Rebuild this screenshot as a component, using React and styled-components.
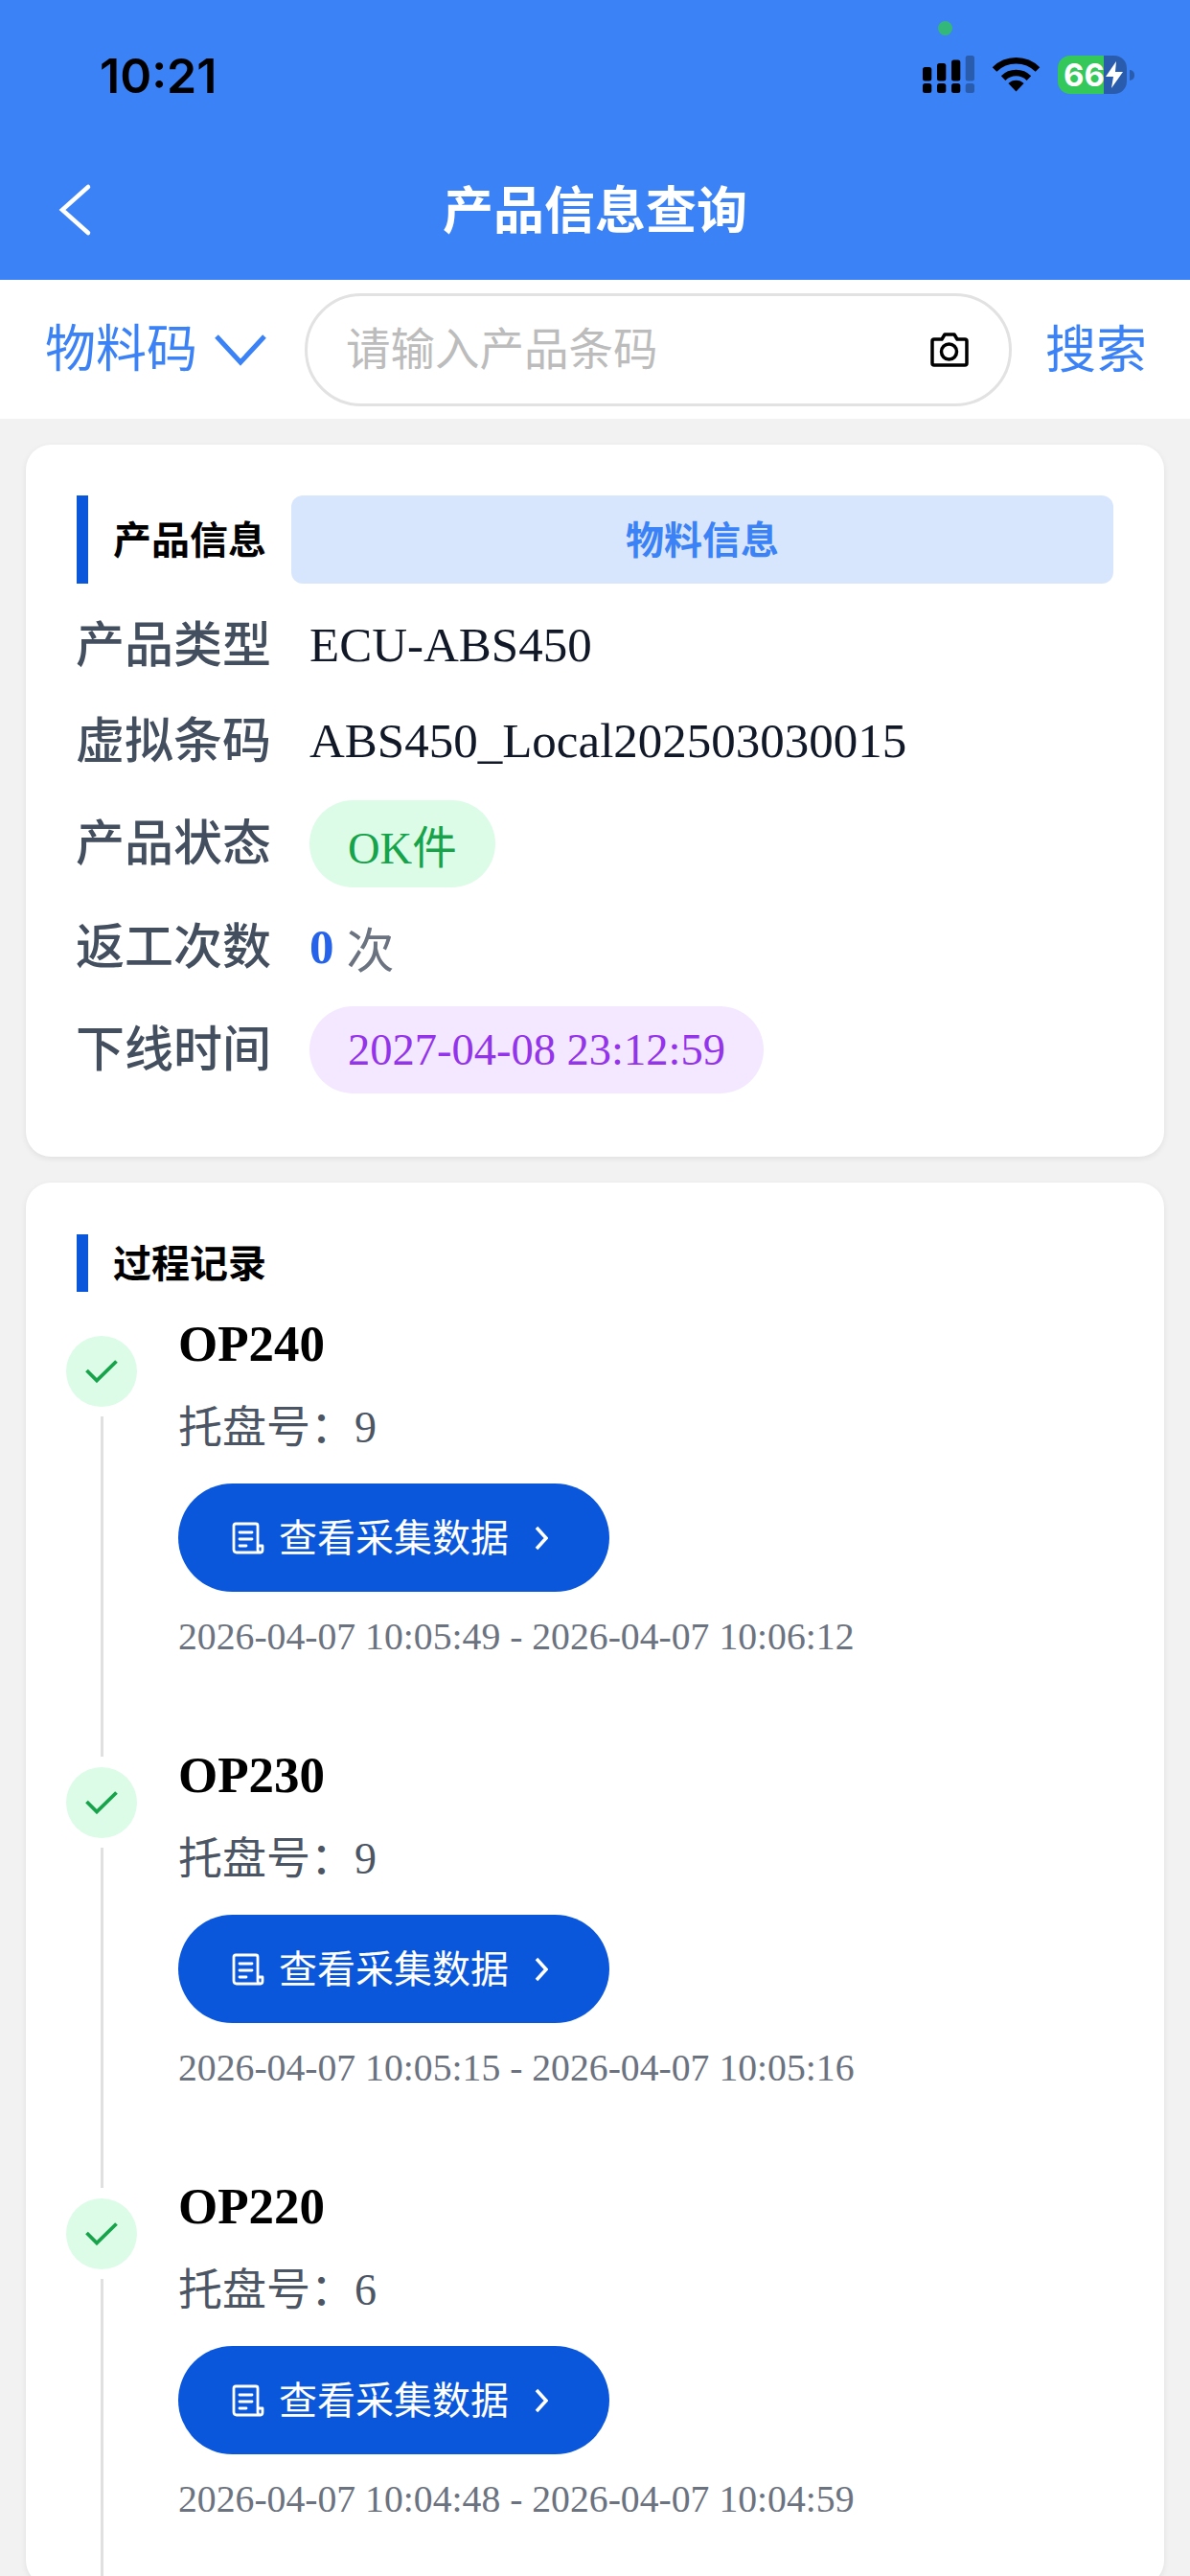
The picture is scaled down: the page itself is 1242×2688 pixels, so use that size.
import React from 'react';
import styled, { createGlobalStyle } from 'styled-components';

const GlobalStyle = createGlobalStyle`
  html, body {
    margin: 0;
    padding: 0;
    background: #f2f2f2;
  }
  * {
    box-sizing: border-box;
  }
`;

const serif = `"Liberation Serif", "Noto Sans CJK SC", serif`;
const sans = `"Noto Sans CJK SC", "Noto Sans", sans-serif`;

const Page = styled.div`
  position: relative;
  width: 1242px;
  height: 2688px;
  overflow: hidden;
  background: #f2f2f2;
  font-family: ${serif};
`;

const Header = styled.header`
  height: 292px;
  background: #3b82f6;
  display: flex;
  flex-direction: column;
`;

const StatusBar = styled.div`
  height: 158px;
  padding: 54px 58px 0 104px;
  display: flex;
  justify-content: space-between;
  align-items: flex-start;
`;

const Clock = styled.span`
  font-family: Inter, sans-serif;
  font-size: 50px;
  font-weight: 600;
  line-height: 50px;
  color: #000;
`;

const StatusIcons = styled.div`
  display: flex;
  align-items: flex-start;
  gap: 18px;
  margin-top: 4px;
`;

const CameraDot = styled.span`
  position: absolute;
  left: 979px;
  top: 22px;
  width: 15px;
  height: 15px;
  border-radius: 50%;
  background: #34b87a;
`;

const Battery = styled.div`
  display: flex;
  align-items: center;
`;

const BatteryBody = styled.div`
  width: 72px;
  height: 40px;
  border-radius: 13px;
  overflow: hidden;
  display: flex;
  background: linear-gradient(90deg, #34c759 0 48px, #2a5cad 48px);
`;

const BatteryText = styled.span`
  width: 48px;
  padding-left: 6px;
  font-family: Inter, sans-serif;
  font-size: 33px;
  line-height: 40px;
  font-weight: 700;
  color: #fff;
`;

const BatteryBolt = styled.svg`
  width: 20px;
  height: 28px;
  margin: 6px 0 0 1px;
`;

const BatteryTip = styled.span`
  width: 5px;
  height: 11px;
  margin-left: 3px;
  border-radius: 0 5px 5px 0;
  background: #2a5cad;
`;

const NavBar = styled.div`
  position: relative;
  flex: 1;
  display: flex;
  align-items: flex-start;
  justify-content: center;
  padding-top: 24px;
`;

const BackIcon = styled.svg`
  position: absolute;
  left: 60px;
  top: 30px;
  width: 37px;
  height: 62px;
`;

const NavTitle = styled.h1`
  margin: 0;
  font-family: ${sans};
  font-size: 53px;
  line-height: 68px;
  font-weight: 700;
  color: #fff;
`;

const SearchBar = styled.div`
  height: 145px;
  background: #fff;
  display: flex;
  align-items: center;
  padding: 0 48px 0 47px;
`;

const Picker = styled.div`
  width: 271px;
  flex: none;
  display: flex;
  align-items: center;
  gap: 18px;
  font-family: ${sans};
  font-size: 53px;
  color: #3b82f6;
`;

const PickerText = styled.span`
  padding-bottom: 9px;
`;

const SearchInput = styled.div`
  width: 738px;
  height: 118px;
  flex: none;
  margin-right: 35px;
  padding: 0 42px 0 40px;
  border: 3px solid #e2e2e2;
  border-radius: 59px;
  display: flex;
  align-items: center;
  justify-content: space-between;
  font-family: ${sans};
  font-size: 46.5px;
  color: #bcbcbc;
`;

const Placeholder = styled.span`
  padding-bottom: 8px;
`;

const SearchAction = styled.span`
  flex: none;
  padding-bottom: 8px;
  font-family: ${sans};
  font-size: 53px;
  color: #3b82f6;
`;

const Card = styled.section`
  margin: 27px 27px 0;
  padding: ${(p) => p.$pad};
  background: #fff;
  border-radius: 26px;
  box-shadow: 0 2px 6px rgba(0, 0, 0, 0.08);
`;

const CardHead = styled.div`
  display: flex;
  align-items: stretch;
  height: ${(p) => p.$height}px;
`;

const SectionTitle = styled.h2`
  margin: 0;
  padding: 0 0 5px 26px;
  border-left: 12px solid #0b57dc;
  display: flex;
  align-items: center;
  font-family: ${sans};
  font-size: 40px;
  font-weight: 700;
  color: #000;
`;

const Tab = styled.div`
  flex: 1;
  margin-left: 26px;
  padding-bottom: 5px;
  border-radius: 12px;
  background: #d8e6fd;
  display: flex;
  align-items: center;
  justify-content: center;
  font-family: ${sans};
  font-size: 40px;
  font-weight: 700;
  color: #3b82f6;
`;

const InfoRows = styled.div`
  margin-top: 16px;
`;

const InfoRow = styled.div`
  height: ${(p) => p.$height}px;
  display: flex;
  align-items: center;
`;

const Label = styled.span`
  width: 244px;
  flex: none;
  margin-left: -1px;
  padding-bottom: 8px;
  font-family: ${sans};
  font-size: 51px;
  font-weight: 500;
  color: #434e5f;
`;

const Value = styled.span`
  font-size: 51px;
  color: #111827;
`;

const Pill = styled.span`
  height: 91px;
  padding: 0 40px;
  border-radius: 46px;
  display: flex;
  align-items: center;
  font-size: 46.5px;
  background: ${(p) => p.$bg};
  color: ${(p) => p.$color};
`;

const Count = styled.strong`
  font-size: 51px;
  color: #2563eb;
`;

const Unit = styled.span`
  margin-left: 13px;
  font-size: 50px;
  color: #6b7280;
`;

const Timeline = styled.div`
  margin-top: 0;
`;

const Step = styled.div`
  height: 450px;
  display: grid;
  grid-template-columns: 117px 1fr;
  margin-left: -11px;
`;

const Rail = styled.div`
  display: flex;
  flex-direction: column;
  align-items: center;
  width: 74px;
  padding-top: 46px;
`;

const Dot = styled.span`
  width: 74px;
  height: 74px;
  flex: none;
  border-radius: 50%;
  background: #dcfce7;
  display: flex;
  align-items: center;
  justify-content: center;
`;

const RailLine = styled.span`
  width: 3px;
  flex: 1;
  margin-top: 10px;
  margin-bottom: -35px;
  background: #e0e0e0;
`;

const StepBody = styled.div`
  display: flex;
  flex-direction: column;
  align-items: flex-start;
`;

const StepName = styled.div`
  height: 68px;
  margin-top: 20px;
  font-size: 53px;
  line-height: 68px;
  font-weight: 700;
  color: #000;
`;

const Tray = styled.div`
  height: 60px;
  margin-top: 24px;
  font-size: 46px;
  line-height: 60px;
  color: #4b5563;
`;

const DataButton = styled.button`
  width: 450px;
  height: 113px;
  margin-top: 28px;
  padding: 0 0 0 56px;
  border: 0;
  border-radius: 57px;
  background: #0b57dc;
  display: flex;
  align-items: center;
  gap: 15px;
  font-family: ${sans};
  font-size: 40px;
  color: #fff;
`;

const ButtonText = styled.span`
  padding-bottom: 5px;
`;

const ButtonChevron = styled.svg`
  width: 14px;
  height: 30px;
  margin-left: 12px;
`;

const Times = styled.div`
  margin-top: 22px;
  font-size: 39.7px;
  line-height: 50px;
  color: #6b7280;
`;

const steps = [
  { name: 'OP240', tray: 9, time: '2026-04-07 10:05:49 - 2026-04-07 10:06:12' },
  { name: 'OP230', tray: 9, time: '2026-04-07 10:05:15 - 2026-04-07 10:05:16' },
  { name: 'OP220', tray: 6, time: '2026-04-07 10:04:48 - 2026-04-07 10:04:59' },
];

const Signal = () => (
  <svg width="54" height="42" viewBox="0 0 54 42">
    <g fill="#000">
      <rect x="0" y="12" width="9.3" height="14.5" rx="2.5" />
      <rect x="15" y="8" width="9.3" height="18.5" rx="2.5" />
      <rect x="30" y="4.5" width="9.3" height="22" rx="2.5" />
      <rect x="0" y="29" width="9.3" height="10" rx="2.5" />
      <rect x="15" y="29" width="9.3" height="10" rx="2.5" />
      <rect x="30" y="29" width="9.3" height="10" rx="2.5" />
    </g>
    <g fill="#2a5cad">
      <rect x="44.7" y="0" width="9.3" height="26.5" rx="2.5" />
      <rect x="44.7" y="29" width="9.3" height="10" rx="2.5" />
    </g>
  </svg>
);

const Wifi = () => (
  <svg width="51" height="38" viewBox="0 0 51 38">
    <g fill="none" stroke="#000" strokeWidth="6.5">
      <path d="M3 14.5 A32 32 0 0 1 48 14.5" />
      <path d="M12.1 23.6 A19 19 0 0 1 38.9 23.6" />
    </g>
    <path d="M25.5 37.5 L17.4 29 A11.5 11.5 0 0 1 33.6 29 Z" fill="#000" />
  </svg>
);

const Camera = () => (
  <svg width="40" height="36" viewBox="0 0 40 36">
    <path
      d="M4 7 H12 L15 2 H25 L28 7 H36 Q38 7 38 9 V32 Q38 34 36 34 H4 Q2 34 2 32 V9 Q2 7 4 7 Z"
      fill="none"
      stroke="#000"
      strokeWidth="3.5"
      strokeLinejoin="round"
    />
    <circle cx="19.5" cy="20" r="8" fill="none" stroke="#000" strokeWidth="3.5" />
  </svg>
);

const DocIcon = () => (
  <svg width="34" height="34" viewBox="0 0 34 34" fill="none" stroke="#fff" strokeWidth="2.8" strokeLinecap="round" strokeLinejoin="round">
    <path d="M30 32 H5 Q2 32 2 29 V4 Q2 2 4 2 H25 Q27 2 27 4 V29 Q27 32 30 32 Q32 32 32 29 V25 H27" />
    <path d="M8 11 H21 M8 18 H21 M8 25 H15" />
  </svg>
);

const Check = () => (
  <svg width="34" height="24" viewBox="0 0 34 24" fill="none" stroke="#16a34a" strokeWidth="3.8">
    <path d="M1.5 11 L12 21.5 L32.5 1.5" />
  </svg>
);

const App = () => (
  <Page>
    <GlobalStyle />
    <Header>
      <StatusBar>
        <Clock>10:21</Clock>
        <StatusIcons>
          <Signal />
          <Wifi />
          <Battery>
            <BatteryBody>
              <BatteryText>66</BatteryText>
              <BatteryBolt viewBox="0 0 20 28">
                <path d="M12 0 L1 16 H9 L7 28 L19 11 H11 Z" fill="#fff" />
              </BatteryBolt>
            </BatteryBody>
            <BatteryTip />
          </Battery>
        </StatusIcons>
      </StatusBar>
      <CameraDot />
      <NavBar>
        <BackIcon viewBox="0 0 37 62" fill="none" stroke="#fff" strokeWidth="4.5" strokeLinecap="round">
          <path d="M32 7 L5 31 L32 55" />
        </BackIcon>
        <NavTitle>产品信息查询</NavTitle>
      </NavBar>
    </Header>

    <SearchBar>
      <Picker>
        <PickerText>物料码</PickerText>
        <svg width="54" height="36" viewBox="0 0 54 36" fill="none" stroke="#3b82f6" strokeWidth="5">
          <path d="M2 4 L27 31 L52 4" />
        </svg>
      </Picker>
      <SearchInput>
        <Placeholder>请输入产品条码</Placeholder>
        <Camera />
      </SearchInput>
      <SearchAction>搜索</SearchAction>
    </SearchBar>

    <Card $pad="53px 53px 58px">
      <CardHead $height={92}>
        <SectionTitle>产品信息</SectionTitle>
        <Tab>物料信息</Tab>
      </CardHead>
      <InfoRows>
        <InfoRow $height={95}>
          <Label>产品类型</Label>
          <Value>ECU-ABS450</Value>
        </InfoRow>
        <InfoRow $height={105}>
          <Label>虚拟条码</Label>
          <Value>ABS450_Local202503030015</Value>
        </InfoRow>
        <InfoRow $height={110}>
          <Label>产品状态</Label>
          <Pill $bg="#dcfce7" $color="#16a34a">OK件</Pill>
        </InfoRow>
        <InfoRow $height={106}>
          <Label>返工次数</Label>
          <Count>0</Count>
          <Unit>次</Unit>
        </InfoRow>
        <InfoRow $height={108}>
          <Label>下线时间</Label>
          <Pill $bg="#f3e8ff" $color="#9333ea">2027-04-08 23:12:59</Pill>
        </InfoRow>
      </InfoRows>
    </Card>

    <Card $pad="54px 53px 0">
      <CardHead $height={60}>
        <SectionTitle>过程记录</SectionTitle>
      </CardHead>
      <Timeline>
        {steps.map((step) => (
          <Step key={step.name}>
            <Rail>
              <Dot>
                <Check />
              </Dot>
              <RailLine />
            </Rail>
            <StepBody>
              <StepName>{step.name}</StepName>
              <Tray>托盘号：{step.tray}</Tray>
              <DataButton>
                <DocIcon />
                <ButtonText>查看采集数据</ButtonText>
                <ButtonChevron viewBox="0 0 14 30" fill="none" stroke="#fff" strokeWidth="3.5">
                  <path d="M2 4 L12 15 L2 26" />
                </ButtonChevron>
              </DataButton>
              <Times>{step.time}</Times>
            </StepBody>
          </Step>
        ))}
      </Timeline>
    </Card>
  </Page>
);

export default App;
